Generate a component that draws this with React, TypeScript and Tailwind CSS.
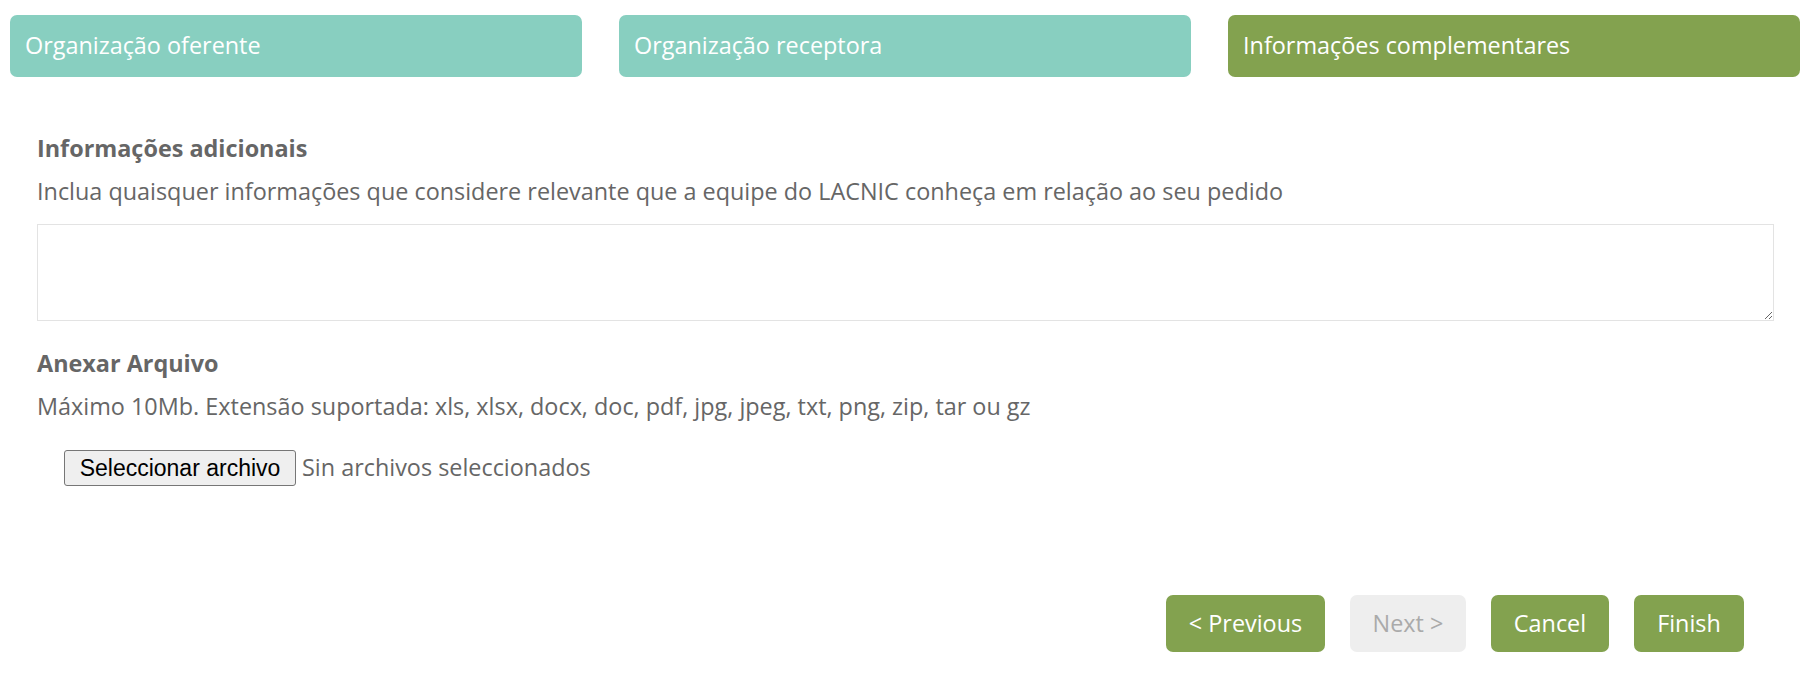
export default function App() {
  return (
    <div className="min-h-screen bg-white font-['Open_Sans',sans-serif] text-[#666666]">
      {/* Steps */}
      <div className="flex gap-[37px] pl-[10px] pr-[14px] pt-[15px]">
        <div className="flex h-[62px] flex-1 items-center rounded-[7px] bg-[#88cfc0] pl-[15px] text-[23.4px] text-white">
          Organização oferente
        </div>
        <div className="flex h-[62px] flex-1 items-center rounded-[7px] bg-[#88cfc0] pl-[15px] text-[23.4px] text-white">
          Organização receptora
        </div>
        <div className="flex h-[62px] flex-1 items-center rounded-[7px] bg-[#83a24f] pl-[15px] text-[23.4px] text-white">
          Informações complementares
        </div>
      </div>

      {/* Form */}
      <div className="pl-[37px] pr-[40px] pt-[55px]">
        <h3 className="text-[23.4px] font-bold leading-[32px]">Informações adicionais</h3>
        <p className="mt-[11px] text-[23.4px] leading-[32px]">
          Inclua quaisquer informações que considere relevante que a equipe do LACNIC conheça em relação ao seu pedido
        </p>
        <textarea className="mt-[17px] block h-[97px] w-full border border-[#e3e3e3] outline-none" />

        <h3 className="mt-[26px] text-[23.4px] font-bold leading-[32px]">Anexar Arquivo</h3>
        <p className="mt-[11px] text-[23.4px] leading-[32px]">
          Máximo 10Mb. Extensão suportada: xls, xlsx, docx, doc, pdf, jpg, jpeg, txt, png, zip, tar ou gz
        </p>

        <div className="mt-[28px] flex items-center pl-[27px]">
          <button className="h-[36px] w-[232px] rounded-[3px] border border-[#767676] bg-[#efefef] font-['Liberation_Sans',Arial,sans-serif] text-[23px] text-black">
            Seleccionar archivo
          </button>
          <span className="ml-[6px] text-[23.4px]">Sin archivos seleccionados</span>
        </div>
      </div>

      {/* Actions */}
      <div className="mt-[109px] flex justify-end gap-[25px] pr-[70px]">
        <button className="h-[57px] w-[159px] rounded-[7px] bg-[#83a24f] text-[23.4px] text-white">&lt; Previous</button>
        <button className="h-[57px] w-[116px] rounded-[7px] bg-[#eeeeee] text-[23.4px] text-[#aaaaaa]">Next &gt;</button>
        <button className="h-[57px] w-[118px] rounded-[7px] bg-[#83a24f] text-[23.4px] text-white">Cancel</button>
        <button className="h-[57px] w-[110px] rounded-[7px] bg-[#83a24f] text-[23.4px] text-white">Finish</button>
      </div>
    </div>
  );
}
